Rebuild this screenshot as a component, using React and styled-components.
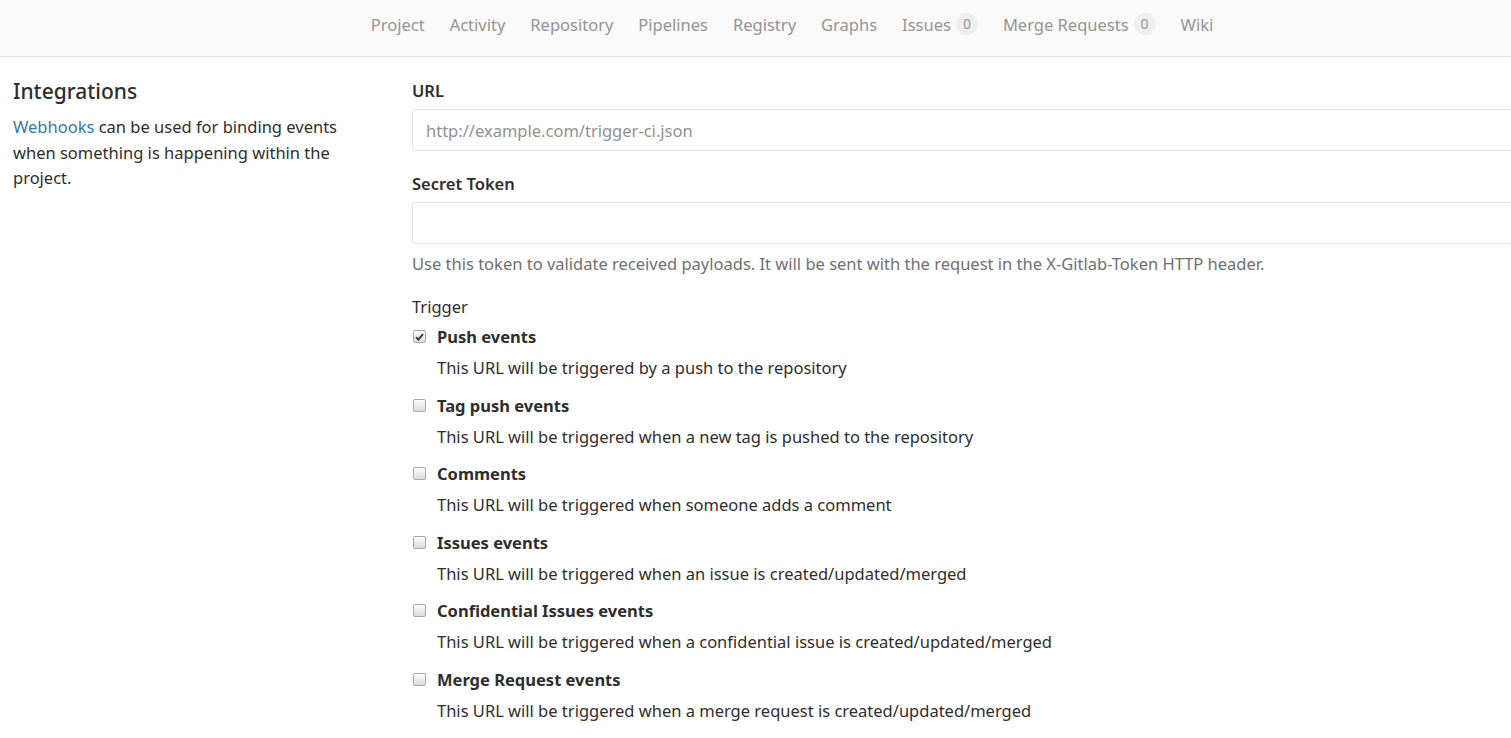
import React from 'react';
import styled, { createGlobalStyle } from 'styled-components';

const font = `"Noto Sans", "Open Sans", Arial, sans-serif`;

const Global = createGlobalStyle`
  body {
    margin: 0;
    font-family: ${font};
    color: #2e2e2e;
    background: #fff;
    overflow: hidden;
  }
`;

const NavBar = styled.div`
  height: 57px;
  background: #fafafa;
  border-bottom: 1px solid #e5e5e5;
  display: flex;
  justify-content: center;
  align-items: center;
  padding: 0 0 8px 73px;
  box-sizing: border-box;
`;

const NavItem = styled.a`
  font-size: 16.5px;
  color: #959494;
  margin: 0 12.5px;
  display: flex;
  align-items: center;
  text-decoration: none;
`;

const Badge = styled.span`
  display: inline-block;
  background: #eee;
  color: #959494;
  font-size: 14px;
  border-radius: 11px;
  padding: 2px 7px;
  margin-left: 5px;
  line-height: 18px;
`;

const Row = styled.div`
  display: flex;
  padding: 23px 0 0 13px;
`;

const Side = styled.div`
  width: 330px;
  flex-shrink: 0;
  margin-right: 69px;
`;

const Heading = styled.h4`
  font-size: 21px;
  font-weight: 500;
  margin: -3px 0 9px;
  line-height: 28px;
`;

const SideText = styled.p`
  font-size: 16.5px;
  line-height: 25.5px;
  margin: 0;
  a { color: #3777b0; text-decoration: none; }
`;

const Main = styled.div`
  flex: 1;
  min-width: 0;
  margin-right: -10px;
`;

const Label = styled.label`
  display: block;
  font-size: 16.5px;
  font-weight: 600;
  line-height: 22px;
  margin: 0 0 7px;
`;

const Input = styled.input`
  display: block;
  width: 100%;
  height: 42px;
  box-sizing: border-box;
  border: 1px solid #e5e5e5;
  border-radius: 3px;
  padding: 0 13px;
  font-family: ${font};
  font-size: 16.5px;
  color: #2e2e2e;
  margin-bottom: 22px;
  &::placeholder { color: #919191; }
`;

const Help = styled.p`
  margin: -13px 0 21px;
  font-size: 16.5px;
  color: #707070;
  line-height: 22px;
`;

const TriggerLabel = styled.div`
  font-size: 16.5px;
  line-height: 22px;
  margin-bottom: 8px;
`;

const Option = styled.div`
  display: flex;
  margin-bottom: 15.6px;
`;

const Box = styled.span`
  width: 13px;
  height: 13px;
  box-sizing: border-box;
  border: 1px solid #a9a9a9;
  border-radius: 2px;
  background: linear-gradient(#fcfcfc, #dcdcdc);
  margin: 4px 11px 0 1px;
  flex-shrink: 0;
  display: flex;
  align-items: center;
  justify-content: center;
`;

const OptionTitle = styled.div`
  font-size: 16.5px;
  font-weight: 700;
  line-height: 22px;
`;

const OptionDesc = styled.div`
  font-size: 16.5px;
  line-height: 22px;
  margin-top: 9px;
  color: #2e2e2e;
`;

const navItems = [
  ['Project'], ['Activity'], ['Repository'], ['Pipelines'], ['Registry'],
  ['Graphs'], ['Issues', 0], ['Merge Requests', 0], ['Wiki'],
];

const options = [
  ['Push events', 'This URL will be triggered by a push to the repository', true],
  ['Tag push events', 'This URL will be triggered when a new tag is pushed to the repository'],
  ['Comments', 'This URL will be triggered when someone adds a comment'],
  ['Issues events', 'This URL will be triggered when an issue is created/updated/merged'],
  ['Confidential Issues events', 'This URL will be triggered when a confidential issue is created/updated/merged'],
  ['Merge Request events', 'This URL will be triggered when a merge request is created/updated/merged'],
];

function Check({ checked }) {
  return (
    <Box>
      {checked && (
        <svg width="9" height="8" viewBox="0 0 9 8">
          <path d="M1 4.2 L3.4 6.6 L8 1.2" fill="none" stroke="#333" strokeWidth="1.8" />
        </svg>
      )}
    </Box>
  );
}

export default function App() {
  return (
    <>
      <Global />
      <NavBar>
        {navItems.map(([name, count]) => (
          <NavItem key={name}>
            {name}
            {count !== undefined && <Badge>{count}</Badge>}
          </NavItem>
        ))}
      </NavBar>
      <Row>
        <Side>
          <Heading>Integrations</Heading>
          <SideText>
            <a href="#">Webhooks</a> can be used for binding events when something is happening within the project.
          </SideText>
        </Side>
        <Main>
          <Label>URL</Label>
          <Input placeholder="http://example.com/trigger-ci.json" />
          <Label>Secret Token</Label>
          <Input />
          <Help>Use this token to validate received payloads. It will be sent with the request in the X-Gitlab-Token HTTP header.</Help>
          <TriggerLabel>Trigger</TriggerLabel>
          {options.map(([title, desc, checked]) => (
            <Option key={title}>
              <Check checked={checked} />
              <div>
                <OptionTitle>{title}</OptionTitle>
                <OptionDesc>{desc}</OptionDesc>
              </div>
            </Option>
          ))}
        </Main>
      </Row>
    </>
  );
}
